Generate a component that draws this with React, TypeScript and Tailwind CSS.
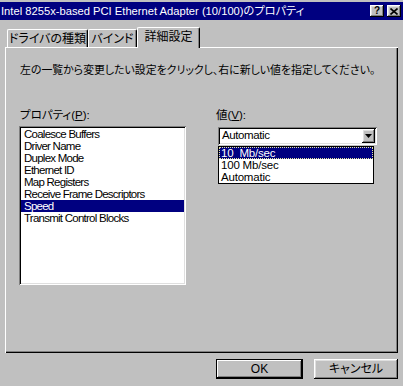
const jp = "font-[family-name:'Liberation_Sans','Noto_Sans_CJK_JP',sans-serif] [font-feature-settings:'palt']";
const ui = "font-[family-name:'Liberation_Sans',Arial,sans-serif]";

const raised = 'shadow-[inset_-1px_-1px_#000,inset_1px_1px_#fff,inset_-2px_-2px_#808080,inset_2px_2px_#dfdfdf]';
const sunken = 'shadow-[inset_1px_1px_#808080,inset_-1px_-1px_#fff,inset_2px_2px_#000,inset_-2px_-2px_#dfdfdf]';

const properties = [
  'Coalesce Buffers',
  'Driver Name',
  'Duplex Mode',
  'Ethernet ID',
  'Map Registers',
  'Receive Frame Descriptors',
  'Speed',
  'Transmit Control Blocks',
];

const speeds = ['10  Mb/sec', '100 Mb/sec', 'Automatic'];

function TitleButton({ children }: { children: React.ReactNode }) {
  return (
    <div className={`flex h-[12px] w-[14px] items-center justify-center bg-[#c0c0c0] ${raised}`}>
      {children}
    </div>
  );
}

function Tab({ label, width, active }: { label: string; width: string; active?: boolean }) {
  return (
    <div
      className={`flex items-center justify-center rounded-t-[2px] border-l border-t border-r border-l-white border-t-white border-r-black bg-[#c0c0c0] text-[12px] text-black shadow-[inset_-1px_0_#808080] ${width} ${
        active ? 'relative z-10 -mb-px h-[21px] pb-[2px]' : 'h-[18px]'
      }`}
    >
      {label}
    </div>
  );
}

export default function App() {
  return (
    <div className={`flex h-[386px] w-[403px] flex-col overflow-hidden bg-[#c0c0c0] pt-[2px] ${jp}`}>
      {/* Title bar */}
      <div className="flex h-[18px] items-center bg-[#000080] pr-[2px]">
        <span className="pl-[1px] text-[11.2px] leading-[18px] text-white">
          Intel 8255x-based PCI Ethernet Adapter (10/100)のプロパティ
        </span>
        <div className="ml-auto flex gap-[3px]">
          <TitleButton>
            <span className={`text-[10px] font-bold leading-none text-black ${ui}`}>?</span>
          </TitleButton>
          <TitleButton>
            <svg width="8" height="7" viewBox="0 0 8 7">
              <path d="M0.5 0.5 L7.5 6.5 M7.5 0.5 L0.5 6.5" stroke="#000" strokeWidth="1.6" />
            </svg>
          </TitleButton>
        </div>
      </div>

      {/* Tabs */}
      <div className="mt-[7px] flex h-[20px] items-end pl-[7px]">
        <Tab label="ドライバの種類" width="w-[81px]" />
        <Tab label="バインド" width="w-[49px]" />
        <Tab label="詳細設定" width="w-[63px]" active />
      </div>

      {/* Tab page */}
      <div className="ml-[5px] flex h-[306px] w-[393px] flex-col bg-[#c0c0c0] pl-[14px] pt-[16px] shadow-[inset_1px_1px_#fff,inset_-1px_-1px_#000,inset_-2px_-2px_#808080]">
        <p className="pl-[1px] text-[10.9px] leading-[14px] text-black">
          左の一覧から変更したい設定をクリックし、右に新しい値を指定してください。
        </p>

        <div className="mt-[31px] flex gap-[30px]">
          {/* Left column */}
          <div className="flex w-[167px] flex-col">
            <span className="h-[18px] pl-[1px] text-[11.5px] leading-[14px] text-black">
              プロパティ(<span className="underline">P</span>):
            </span>
            <div className={`h-[159px] w-[167px] bg-white p-[2px] ${sunken}`}>
              {properties.map((p) => (
                <div
                  key={p}
                  className={`h-[12px] pl-[3px] text-[11.5px] leading-[12px] tracking-[-0.75px] ${ui} ${
                    p === 'Speed' ? 'bg-[#000080] text-white' : 'text-black'
                  }`}
                >
                  {p}
                </div>
              ))}
            </div>
          </div>

          {/* Right column */}
          <div className="flex w-[160px] flex-col">
            <span className="h-[19px] text-[11.5px] leading-[14px] text-black">
              値(<span className="underline">V</span>):
            </span>
            <div className="ml-[2px] flex flex-col">
              <div className={`flex h-[18px] w-[159px] items-center bg-white p-[2px] ${sunken}`}>
                <span className={`pl-[2px] text-[11.5px] tracking-[-0.4px] text-black ${ui}`}>Automatic</span>
                <div className={`ml-auto flex h-[14px] w-[13px] items-center justify-center bg-[#c0c0c0] ${raised}`}>
                  <svg width="7" height="4" viewBox="0 0 7 4">
                    <path d="M0 0 H7 L3.5 4 Z" fill="#000" />
                  </svg>
                </div>
              </div>
              <div className="mt-px h-[38px] w-[156px] border border-black bg-white">
                {speeds.map((s, i) => (
                  <div
                    key={s}
                    className={`h-[12px] whitespace-pre pl-px text-[11.5px] leading-[10px] tracking-[-0.2px] ${ui} ${
                      i === 0 ? 'border border-dotted border-[#e8e8a0] bg-[#000080] text-white' : 'border border-transparent text-black'
                    }`}
                  >
                    {s}
                  </div>
                ))}
              </div>
            </div>
          </div>
        </div>
      </div>

      {/* Dialog buttons */}
      <div className="mt-[6px] flex justify-end gap-[11px] pr-[5px]">
        <button className={`flex h-[20px] w-[87px] items-center justify-center border border-black bg-[#c0c0c0] text-[12px] text-black shadow-[inset_-1px_-1px_#000,inset_1px_1px_#fff,inset_-2px_-2px_#808080] ${ui}`}>
          OK
        </button>
        <button className={`flex h-[20px] w-[84px] items-center justify-center bg-[#c0c0c0] text-[12px] text-black ${raised}`}>
          キャンセル
        </button>
      </div>
    </div>
  );
}
